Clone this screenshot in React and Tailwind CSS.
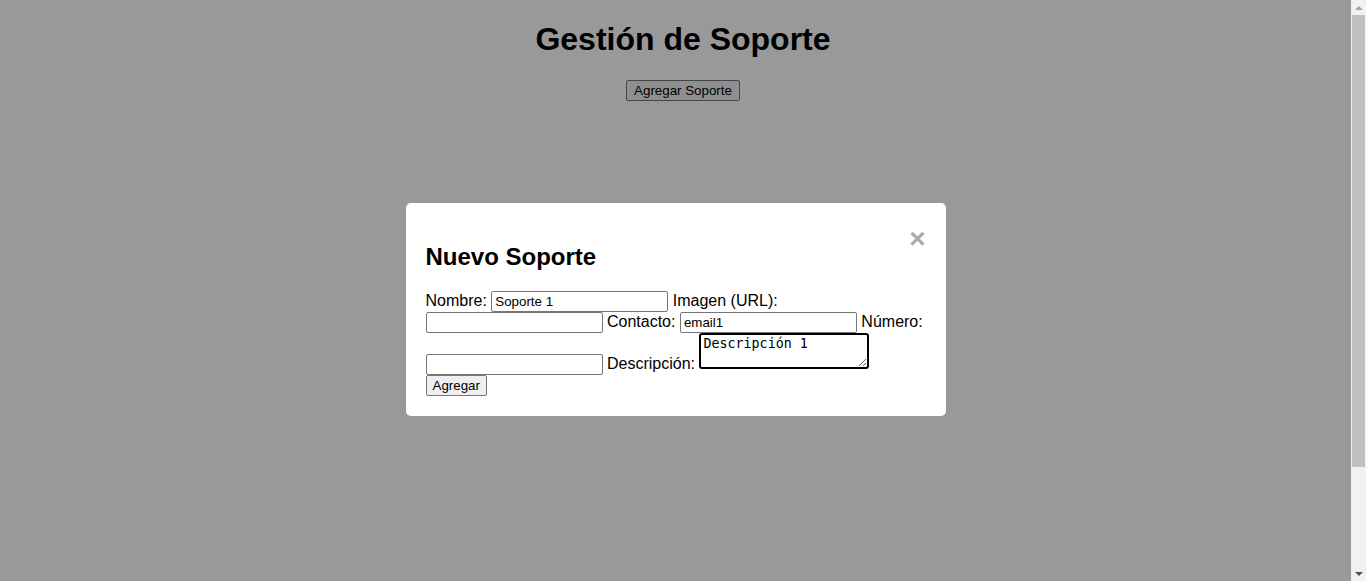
import React, { useState } from "react";

const inputCls =
  "w-[177px] h-[21px] border border-[#767676] rounded-[2px] bg-white px-[3px] py-[1px] text-[13.33px] text-black align-baseline";

// Barra de desplazamiento de la ventana
function ScrollBar() {
  return (
    <div className="fixed top-0 right-0 bottom-0 w-[15px] bg-[#f1f1f1] flex flex-col items-center">
      <div className="h-[15px] flex items-center justify-center">
        <div className="w-0 h-0 border-l-[4px] border-r-[4px] border-b-[4px] border-l-transparent border-r-transparent border-b-[#a3a3a3]" />
      </div>
      <div className="w-[13px] h-[452px] bg-[#c1c1c1]" />
      <div className="flex-1" />
      <div className="h-[15px] flex items-center justify-center">
        <div className="w-0 h-0 border-l-[4px] border-r-[4px] border-t-[4px] border-l-transparent border-r-transparent border-t-[#505050]" />
      </div>
    </div>
  );
}

function App() {
  const [form, setForm] = useState({
    nombre: "Soporte 1",
    imagen: "",
    contacto: "email1",
    numero: "",
    descripcion: "Descripción 1",
  });

  const set = (k) => (e) => setForm({ ...form, [k]: e.target.value });

  return (
    <div className="min-h-[581px] bg-white text-black pr-[15px] font-['Liberation_Sans',Arial,sans-serif]">
      {/* Cabecera */}
      <div className="text-center pl-[15px]">
        <h1 className="text-[32px] font-bold leading-[37px] pt-[21px] mb-[20px]">
          Gestión de Soporte
        </h1>
        <button className="h-[21px] px-[7px] text-[13.33px] leading-[15px] bg-[#efefef] border border-[#767676] rounded-[2px]">
          Agregar Soporte
        </button>
      </div>

      {/* Modal */}
      <div className="fixed top-0 bottom-0 left-0 right-[15px] bg-black/40 pt-[203px]">
        <div className="mx-auto w-[540px] bg-white rounded-[5px] p-5">
          <span className="float-right text-[#aaaaaa] text-[28px] font-bold leading-[32px] cursor-pointer">
            ×
          </span>
          <h2 className="text-[24px] font-bold leading-[27.6px] mt-[20px] mb-[20px]">
            Nuevo Soporte
          </h2>
          <form className="text-[16px] leading-[18.4px]">
            <label>Nombre: </label>
            <input className={inputCls} value={form.nombre} onChange={set("nombre")} />{" "}
            <label>Imagen (URL): </label>
            <input className={inputCls} value={form.imagen} onChange={set("imagen")} />{" "}
            <label>Contacto: </label>
            <input className={inputCls} value={form.contacto} onChange={set("contacto")} />{" "}
            <label>Número: </label>
            <input className={inputCls} value={form.numero} onChange={set("numero")} />{" "}
            <label>Descripción: </label>
            <textarea
              rows={2}
              className="w-[170px] h-[36px] border-2 border-black rounded-[3px] bg-white px-[2px] pt-[1px] text-[13.33px] leading-[15px] font-['DejaVu_Sans_Mono','Liberation_Mono',monospace] align-baseline resize"
              value={form.descripcion}
              onChange={set("descripcion")}
            />
            <br />
            <button
              type="button"
              className="h-[21px] px-[6px] text-[13.33px] leading-[15px] bg-[#efefef] border border-[#767676] rounded-[2px] align-baseline"
            >
              Agregar
            </button>
          </form>
        </div>
      </div>

      <ScrollBar />
    </div>
  );
}

export default App;
